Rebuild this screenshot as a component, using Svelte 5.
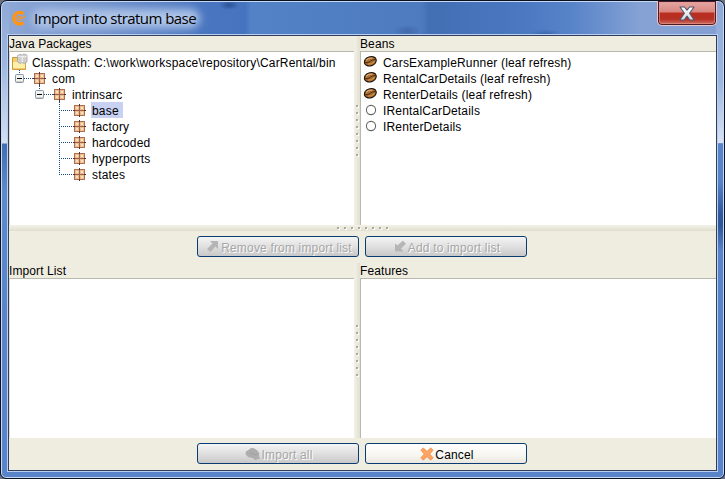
<script>
  const tree = [
    { label: 'com', depth: 1, open: true },
    { label: 'intrinsarc', depth: 2, open: true },
    { label: 'base', depth: 3, selected: true },
    { label: 'factory', depth: 3 },
    { label: 'hardcoded', depth: 3 },
    { label: 'hyperports', depth: 3 },
    { label: 'states', depth: 3, last: true },
  ];
  const beans = [
    { label: 'CarsExampleRunner (leaf refresh)', leaf: true },
    { label: 'RentalCarDetails (leaf refresh)', leaf: true },
    { label: 'RenterDetails (leaf refresh)', leaf: true },
    { label: 'IRentalCarDetails', leaf: false },
    { label: 'IRenterDetails', leaf: false },
  ];
</script>

{#snippet grip(vertical)}
  <span class="grip" class:vertical>
    {#each Array(8) as _}<i></i>{/each}
  </span>
{/snippet}

{#snippet packageIcon(x)}
  <g transform="translate({x} 2)">
    <rect x="1.5" y="1.5" width="10" height="10" fill="#dca67c" stroke="#ab6e50" />
    <path d="M2 2h4v4H2zM7 2h4v4H7zM2 7h4v4H2zM7 7h4v4H7z" fill="#ecbd93" />
    <path d="M3 3h2v2H3zM8 3h2v2H8zM3 8h2v2H3zM8 8h2v2H8z" fill="#fbdfb6" />
    <path d="M6.5 1v11M1 6.5h11" stroke="#9c624a" />
    <path d="M6.5 0v2M6.5 11v2M0 6.5h2M11 6.5h2" stroke="#5f2c28" />
  </g>
{/snippet}

<div class="window">
  <header>
    <svg class="logo" width="16" height="17" viewBox="0 0 16 17">
      <path d="M12.4 3.9A5.7 5.7 0 1 0 12.4 12.5" fill="none" stroke="#ff9416" stroke-width="3.6" />
      <path d="M9.9 9.6A1.9 1.9 0 1 1 10 7.3M8.6 8.4 11.4 8.2 14.6 6.4" fill="none" stroke="#ff9416" stroke-width="1.3" />
    </svg>
    <h1>Import into stratum base</h1>
    <button class="close" aria-label="Close">
      <svg width="16" height="15" viewBox="0 0 16 15">
        <defs><linearGradient id="x" x2="0" y2="1"><stop stop-color="#fff" /><stop offset="1" stop-color="#d5d5d8" /></linearGradient></defs>
        <path d="M1 1H5.4L8 4.2 10.6 1H15L10.6 7.3 15.2 14H10.8L8 10.2 5.2 14H.8L5.4 7.3Z" fill="url(#x)" stroke="#505671" stroke-width="1.1" stroke-linejoin="round" />
      </svg>
    </button>
  </header>

  <main>
    <div class="split top">
      <section class="left">
        <h2>Java Packages</h2>
        <div class="body">
          <div class="row root">
            <svg width="23" height="18" viewBox="9 -1 23 18">
              <path d="M12.5 3.5h5l1 2h7v10h-13z" fill="#f6ce69" stroke="#c89b3a" />
              <path d="M13 8h12v7H13z" fill="#fff0a9" />
              <path d="M13 15h12M25.5 7v8" stroke="#d8a543" />
              <path d="M17.5 1.5 20 .3l2 .7 2-1 3 1v7l-3 1.5-2-1-2 1-2.5-1.5z" fill="#cecece" stroke="#a9a9a9" stroke-width=".8" />
              <path d="m18 2 2.3 1 2-1 2 1 2.5-1M22.3 2v6" fill="none" stroke="#f5f5f5" />
            </svg>
            <span>Classpath: C:\work\workspace\repository\CarRental/bin</span>
          </div>
          {#each tree as node}
            {@const iconX = 13 + node.depth * 20}
            {@const boxX = iconX - 18}
            <div class="row">
              <svg width={iconX + 5} height="16" viewBox="9 0 {iconX + 5} 16">
                {#if node.open}
                  <path d="M{boxX + 4.5} 0v4M{boxX + 9} 8.5h9M{iconX + 6.5} 15v1" class="dots" />
                  <rect x={boxX + 0.5} y="4.5" width="8" height="8" rx="1" fill="#f4f2ec" stroke="#8296ae" />
                  <path d="M{boxX + 1} 11.5h7" stroke="#d2ccbd" />
                  <path d="M{boxX + 2} 8.5h5" stroke="#000" />
                {:else}
                  <path d="M{iconX - 13.5} 0v{node.last ? 9 : 16}M{iconX - 12} 8.5h11" class="dots" />
                {/if}
                {@render packageIcon(iconX)}
              </svg>
              <span class="name" class:selected={node.selected}>{node.label}</span>
            </div>
          {/each}
        </div>
      </section>
      <div class="bar">{@render grip(true)}</div>
      <section class="right">
        <h2>Beans</h2>
        <div class="body">
          {#each beans as bean}
            <div class="row">
              <svg width="23" height="16" viewBox="0 0 23 16">
                {#if bean.leaf}
                  <ellipse cx="10.3" cy="7.3" rx="6.1" ry="4.5" transform="rotate(-18 10.3 7.3)" fill="#a66c2e" stroke="#21170d" stroke-width="1.2" />
                  <path d="M6 6.2Q8.4 3.7 12.6 4.2" fill="none" stroke="#d8a673" stroke-width="1.3" />
                  <path d="M5.2 8.7Q8.4 9.2 10.2 7.4T15.3 5.6" fill="none" stroke="#4d2c10" stroke-width="1" />
                  <path d="M8 10.2Q12.4 10.1 14.6 7.4" fill="none" stroke="#c88b45" stroke-width="1.2" />
                {:else}
                  <circle cx="11" cy="8" r="4.6" fill="#fff" stroke="#666" stroke-width="1.1" />
                {/if}
              </svg>
              <span>{bean.label}</span>
            </div>
          {/each}
        </div>
      </section>
    </div>

    <div class="hbar">{@render grip(false)}</div>

    <div class="actions">
      <button class="action" disabled>
        <svg width="14" height="13" viewBox="0 0 14 13"><path d="M4 1h8v8L9.5 6.6 4.5 12 1 9 6.5 3.6z" fill="#b5b5b5" /></svg>
        <span>Remove from import list</span>
      </button>
      <button class="action" disabled>
        <svg width="13" height="13" viewBox="0 0 13 13"><path d="M1 3.5 3.5 5.5 8.8.8 12 3.8 7 8.5 9.5 11.5H1z" fill="#b5b5b5" /></svg>
        <span>Add to import list</span>
      </button>
    </div>

    <div class="split bottom">
      <section class="left"><h2>Import List</h2><div class="body"></div></section>
      <div class="bar">{@render grip(true)}</div>
      <section class="right"><h2>Features</h2><div class="body"></div></section>
    </div>

    <div class="actions">
      <button class="action" disabled>
        <svg width="15" height="14" viewBox="0 0 15 14">
          <path d="M1 4.5 3.5 3 6 1l3 .2 3 2 2.3 3-.4 3L15 12h-3l-1 1.5L7.5 11 5 10.5 3 10 .5 7z" fill="#adadad" />
          <path d="m5 7 3-1 1 2 3-1" fill="none" stroke="#a2a2a2" />
        </svg>
        <span>Import all</span>
      </button>
      <button class="action">
        <svg width="14" height="14" viewBox="0 0 14 14">
          <path d="M1 3.3 3.3 1 7 4.5 10.7 1 13 3.3 9.6 7 13 10.7 10.7 13 7 9.6 3.3 13 1 10.7 4.4 7z" fill="#fda663" stroke="#f5894a" stroke-linejoin="round" />
        </svg>
        <span>Cancel</span>
      </button>
    </div>
  </main>
</div>

<style>
  :global(body) { background: #6d7080; }
  * { box-sizing: border-box; }
  .window {
    width: 725px;
    height: 479px;
    border: 1px solid #0b1020;
    border-radius: 7px 7px 6px 6px;
    padding: 0 6px 6px;
    box-shadow: inset 0 0 0 1px #c6daf3;
    background:
      radial-gradient(ellipse 10px 5px at 228px 4px, #2b5396, transparent),
      radial-gradient(ellipse 14px 6px at 406px 30px, #3f69aa, transparent),
      radial-gradient(ellipse 16px 5px at 544px 33px, #3c68b2, transparent),
      linear-gradient(#8faad9 0, #9db6df 80px, #d9e3f3 142px, #7fa3d8 142px, transparent 143px) right / 8px 100% no-repeat,
      linear-gradient(#8fa9d7 0, #9db6df 60px, #d3dff1 142px, #3f6eb4 143px, #5c8acd 190px, transparent 320px) left / 8px 100% no-repeat,
      linear-gradient(transparent 180px, #31599f 212px, #2f5697 224px, transparent 250px) right / 8px 100% no-repeat,
      linear-gradient(90deg, #8fa8d6 0, #7595cd 90px, #4a76c0 200px, #4673bf 244px, #5382c7 250px, #4e7bbf 420px, #426eb3 428px, #4a78c1 520px, #5783c8 570px, #86a2d5 640px, #84a0d2 100%) top / 100% 35px no-repeat,
      #5984c9;
    font: 12px "Liberation Sans", Arial, sans-serif;
    color: #000;
  }
  header { display: flex; height: 33px; position: relative; padding-left: 4px; align-items: flex-start; }
  .logo { margin-top: 9px; }
  h1 {
    position: relative;
    z-index: 0;
    margin: 4px 0 0 -3px;
    padding: 2px 12px 2px 10px;
    font: 15px/23px "Open Sans", "Noto Sans", sans-serif;
    letter-spacing: -.55px;
    white-space: nowrap;
  }
  h1::before {
    content: "";
    position: absolute;
    z-index: -1;
    inset: 4px 8px 4px 8px;
    border-radius: 10px;
    background: #afc5e8;
    filter: blur(4px);
  }
  .close {
    position: absolute;
    right: 1px;
    top: 0;
    width: 60px;
    height: 25px;
    padding: 0;
    display: grid;
    place-items: center;
    border: 1px solid #e9c5ca;
    border-top: 0;
    border-radius: 0 0 5px 5px;
    box-shadow: inset 0 0 0 1px #4b1b28, inset 0 0 0 2px #e5999199;
    background: linear-gradient(#e6a9a7, #d88780 11px, #b92e20 12px, #b63023 18px, #d37768);
  }
  main {
    width: 709px;
    height: 436px;
    margin: 1px 0 0 1px;
    border: 1px solid #303d5c;
    box-shadow: 0 0 0 1px #b8cff0;
    background: #efede0;
    display: flex;
    flex-direction: column;
  }
  .split { display: flex; flex: none; }
  .top { height: 189px; }
  .bottom { height: 175px; }
  section { display: flex; flex-direction: column; }
  .left { width: 345px; }
  .right { width: 356px; }
  h2 {
    margin: 0;
    height: 15px;
    font: 12px/16px "Liberation Sans", Arial, sans-serif;
    letter-spacing: .1px;
    white-space: nowrap;
  }
  .body { flex: 1; background: #fff; border-top: 1px solid #b9b9b0; border-left: 1px solid #b9b9b0; padding-top: 2px; }
  .left .body { border-left-color: #dedccf; }
  .bar {
    width: 6px;
    display: flex;
    align-items: center;
    justify-content: center;
    background: linear-gradient(90deg, #f3f2e8, #e2e0d2);
  }
  .hbar {
    height: 6px;
    flex: none;
    display: flex;
    align-items: center;
    justify-content: center;
    background: linear-gradient(#f3f2e8, #e0dece);
  }
  .grip { display: flex; gap: 5px; }
  .grip.vertical { flex-direction: column; }
  .grip i { width: 2px; height: 2px; background: #aaa99e; box-shadow: 1px 1px #fff; }
  .row { display: flex; height: 16px; margin-left: -1px; line-height: 18px; letter-spacing: .18px; white-space: nowrap; }
  .row svg { flex: none; display: block; }
  .root svg { margin-top: -1px; }
  .name { margin-left: 4px; padding: 0 4px 0 1px; }
  .selected { background: #c8d1f2; }
  .dots { fill: none; stroke: #174c80; stroke-dasharray: 1 1; }
  .actions { height: 32px; flex: none; padding: 5px 0 0 188px; display: flex; gap: 6px; }
  .action {
    width: 162px;
    height: 21px;
    padding: 0;
    display: flex;
    align-items: center;
    justify-content: center;
    border: 1px solid #083c73;
    border-radius: 3px;
    background: linear-gradient(#fff, #f7f6f1 60%, #e9e7df);
    font: 12px/19px "Liberation Sans", Arial, sans-serif;
    letter-spacing: .17px;
    color: #000;
    white-space: nowrap;
  }
  .action:disabled {
    color: #a7a7a7;
    text-shadow: 1px 1px #fff;
    background: linear-gradient(#f4f4f4, #e0e0e0 50%, #c8c8c8);
  }
  .action svg { flex: none; margin: 0 1px 0 2px; }
  .action span { padding-top: 4px; }
</style>
